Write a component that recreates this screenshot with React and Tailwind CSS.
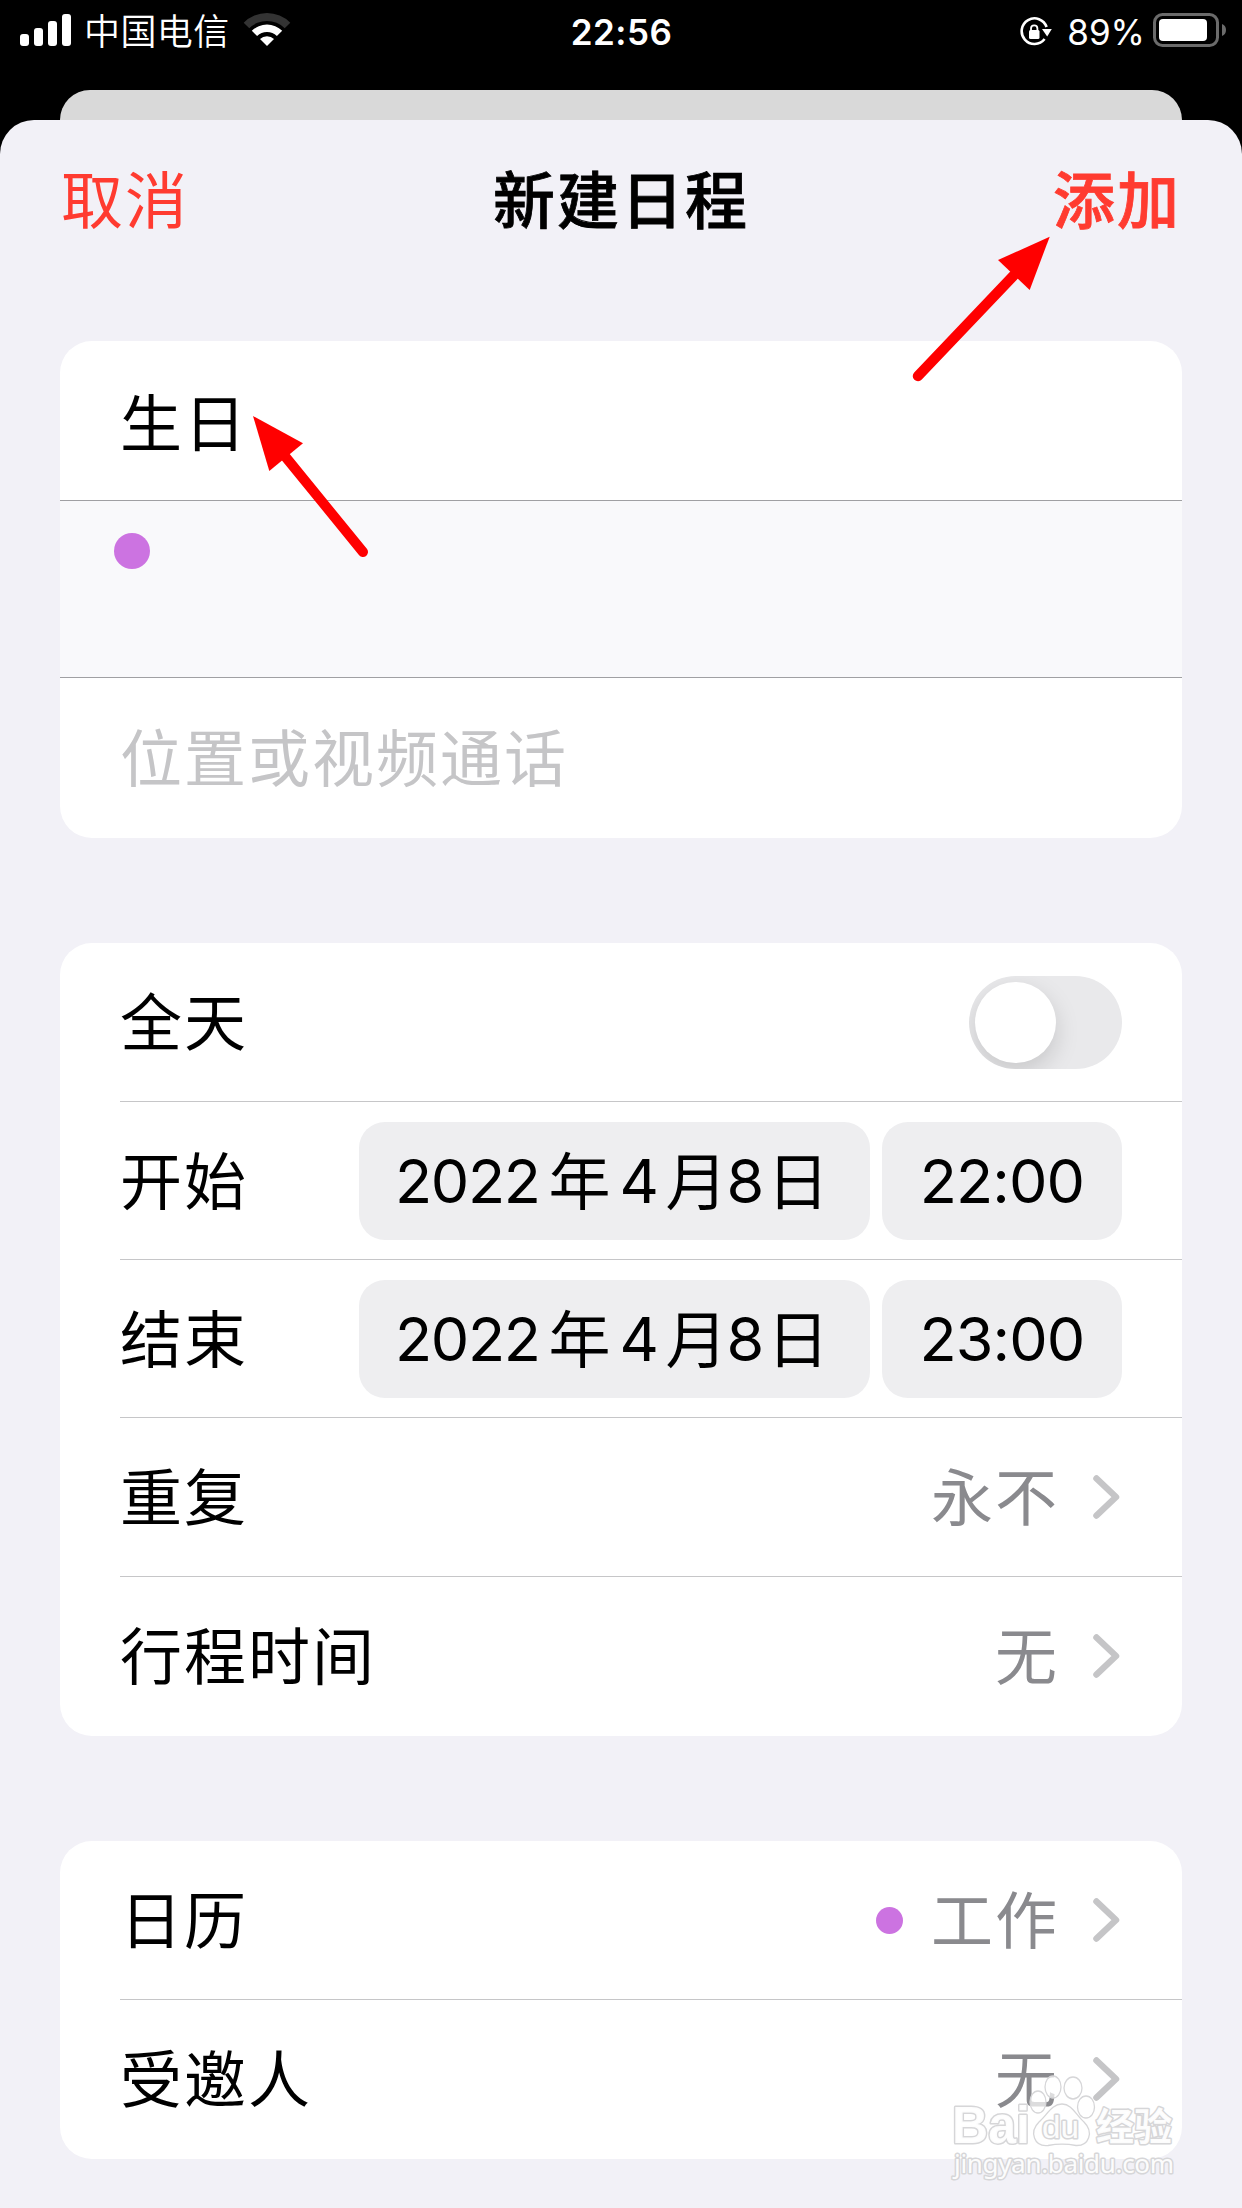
function StatusBar() {
  return (
    <header className="grid h-[90px] grid-cols-[1fr_auto_1fr] items-start bg-black pr-[15px] pl-5 text-white">
      <div className="flex h-16 items-center">
        <svg className="h-16 w-[52px]" viewBox="0 0 52 64" fill="white">
          <rect x="0" y="34" width="9" height="12" rx="3" />
          <rect x="14" y="28" width="9" height="18" rx="3" />
          <rect x="28" y="21" width="9" height="25" rx="3" />
          <rect x="42" y="14" width="9" height="32" rx="3" />
        </svg>
        <span className="ml-3 text-[36px] leading-[64px] font-[350] tracking-[0.4px]">中国电信</span>
        <svg className="ml-[13px] h-16 w-12" viewBox="0 0 48 64" fill="white">
          <path d="M0.7 22.7A33 33 0 0 1 47.3 22.7L41.7 28.3A25 25 0 0 0 6.3 28.3Z" fill="#333" />
          <path d="M8.8 30.8A21.5 21.5 0 0 1 39.2 30.8L33.9 36.1A14 14 0 0 0 14.1 36.1Z" />
          <path d="M17 39A10 10 0 0 1 31 39L24 46Z" />
        </svg>
      </div>
      <span className="pr-1 text-[35px] leading-[64px] font-semibold tracking-[0.5px]">22:56</span>
      <div className="flex h-16 items-center justify-end">
        <svg className="h-16 w-8" viewBox="0 0 32 64" fill="none">
          <path d="M26.6 27A12.8 12.8 0 1 0 24.6 39" stroke="white" strokeWidth="2.6" />
          <path d="M22 29H31.8L27.2 36.5Z" fill="white" />
          <rect x="9" y="30" width="10.5" height="9" rx="1.5" fill="white" />
          <path d="M11 31v-2.5a3.2 3.2 0 0 1 6.4 0V31" stroke="white" strokeWidth="1.8" />
        </svg>
        <span className="ml-[15px] text-[35px] leading-[64px]">89%</span>
        <svg className="ml-2 h-16 w-[74px]" viewBox="0 0 74 64">
          <rect x="1.5" y="14.5" width="63" height="31" rx="8" fill="none" stroke="#6b6b6b" strokeWidth="3" />
          <rect x="6" y="19" width="48" height="22" rx="4" fill="white" />
          <path d="M69 24a6.5 6.5 0 0 1 0 12Z" fill="#6b6b6b" />
        </svg>
      </div>
    </header>
  )
}

function Row({ label, className, last, children }) {
  return (
    <div className={`flex pl-[60px] ${className}`}>
      <div className={`flex flex-1 items-center pr-[60px] ${last ? '' : 'border-b border-[#c6c6c8]'}`}>
        <span className="mr-auto pt-1">{label}</span>
        {children}
      </div>
    </div>
  )
}

function Chevron() {
  return (
    <svg className="ml-[33px] h-12 w-[30px]" viewBox="0 0 30 48" fill="none">
      <path d="M4.5 5.5L24 24L4.5 42.5" stroke="#c5c5c7" strokeWidth="6.5" strokeLinecap="round" strokeLinejoin="round" />
    </svg>
  )
}

function Digits({ className, children }) {
  return <span className={`text-[61px] tracking-[-1.4px] ${className}`}>{children}</span>
}

function DatePills({ time }) {
  return (
    <div className="flex gap-3">
      <div className="flex h-[118px] w-[511px] items-center rounded-[26px] bg-[#eeeef0] pl-9">
        <Digits>2022</Digits>
        <span className="ml-[9px] pt-1">年</span>
        <Digits className="ml-[7px]">4</Digits>
        <span className="ml-2 pt-1">月</span>
        <Digits className="-ml-[3px]">8</Digits>
        <span className="ml-1 pt-1">日</span>
      </div>
      <div className="flex h-[118px] w-[240px] items-center justify-center rounded-[26px] bg-[#eeeef0] text-[61px] tracking-[-0.9px]">
        {time}
      </div>
    </div>
  )
}

function Arrows() {
  return (
    <svg className="pointer-events-none absolute inset-0 h-[600px] w-[1242px]" viewBox="0 0 1242 600" fill="#ff0000" stroke="#ff0000">
      <path d="M1049.7 236.7L998 260L1029.7 290Z" stroke="none" />
      <path d="M918 376L1016 273" strokeWidth="10.5" strokeLinecap="round" />
      <path d="M253 416L303 443.3L269.3 471Z" stroke="none" />
      <path d="M363 552L284 455" strokeWidth="10" strokeLinecap="round" />
    </svg>
  )
}

function Watermark() {
  return (
    <svg
      className="pointer-events-none absolute right-[60px] bottom-4 h-[120px] w-[240px]"
      viewBox="942 2072 240 120"
      fill="white"
      fillOpacity="0.7"
      stroke="#d6d6d8"
      strokeWidth="1.3"
    >
      <ellipse cx="1053" cy="2087" rx="8" ry="11" />
      <ellipse cx="1073" cy="2088" rx="9" ry="11" />
      <ellipse cx="1038" cy="2102" rx="8" ry="11" />
      <ellipse cx="1086" cy="2107" rx="8.5" ry="11" />
      <path d="M1062 2104C1072 2104 1076 2115 1084 2122C1094 2132 1089 2146 1076 2145.5C1068 2144 1056 2144 1048 2145.5C1034 2147 1029 2132 1039 2122C1047 2115 1052 2104 1062 2104Z" />
      <g fillOpacity="0.95" strokeWidth="3" strokeLinejoin="round" paintOrder="stroke">
        <text x="952" y="2143" fontFamily="Liberation Sans" fontWeight="700" fontSize="51" textLength="78" lengthAdjust="spacingAndGlyphs">Bai</text>
        <text x="1042" y="2138" fontFamily="Liberation Sans" fontSize="31" textLength="37" lengthAdjust="spacingAndGlyphs">du</text>
        <text x="1096" y="2140" fontFamily="Noto Sans CJK SC" fontWeight="700" fontSize="38" textLength="76">经验</text>
        <text x="954" y="2173" fontFamily="Noto Sans" fontSize="26" textLength="220">jingyan.baidu.com</text>
      </g>
    </svg>
  )
}

export default function App() {
  return (
    <div className="relative h-[2208px] w-[1242px] overflow-hidden bg-black font-['Inter','Noto_Sans_CJK_SC',sans-serif] text-black">
      <StatusBar />
      <div className="mx-[60px] h-[30px] rounded-t-[30px] bg-[#d9d9d9]" />

      <main className="h-[2088px] rounded-t-[34px] bg-[#f2f1f7] px-[60px] text-[62px] leading-[90px] tracking-[2px]">
        {/* Navigation */}
        <div className="mb-[61px] grid h-40 grid-cols-3 items-center pt-1 text-[#ff3b30]">
          <button className="pl-px text-left">取消</button>
          <h1 className="text-center font-medium text-black [-webkit-text-stroke:0.8px_black]">新建日程</h1>
          <button className="pr-px text-right font-medium [-webkit-text-stroke:0.8px_#ff3b30]">添加</button>
        </div>

        {/* Title and location */}
        <section className="overflow-hidden rounded-[32px] bg-white">
          <div className="flex h-[159px] items-center pt-2 pl-[60px]">生日</div>
          <div className="h-[178px] border-y border-[#a0a0a3] bg-[#f9f9fb] pt-8 pl-[54px]">
            <div className="size-9 rounded-full bg-[#cc73e1]" />
          </div>
          <div className="flex h-[160px] items-center pt-1 pl-[60px] text-[#c5c5c7]">位置或视频通话</div>
        </section>

        {/* Time */}
        <section className="mt-[105px] rounded-[32px] bg-white">
          <Row label="全天" className="h-[159px]">
            <div className="h-[93px] w-[153px] overflow-hidden rounded-full bg-[#e9e9eb] p-1.5">
              <div className="size-[81px] rounded-full bg-white shadow-[0_9px_24px_rgba(0,0,0,0.15)]" />
            </div>
          </Row>
          <Row label="开始" className="h-[158px]">
            <DatePills time="22:00" />
          </Row>
          <Row label="结束" className="h-[158px]">
            <DatePills time="23:00" />
          </Row>
          <Row label="重复" className="h-[159px]">
            <span className="pt-1 text-[#8a8a8e]">永不</span>
            <Chevron />
          </Row>
          <Row label="行程时间" className="h-[159px] pb-px" last>
            <span className="pt-1 text-[#8a8a8e]">无</span>
            <Chevron />
          </Row>
        </section>

        {/* Calendar */}
        <section className="mt-[105px] rounded-[32px] bg-white">
          <Row label="日历" className="h-[159px]">
            <span className="mr-7 size-[27px] rounded-full bg-[#cc73e1]" />
            <span className="pt-1 text-[#8a8a8e]">工作</span>
            <Chevron />
          </Row>
          <Row label="受邀人" className="h-[159px] pb-px" last>
            <span className="pt-1 text-[#8a8a8e]">无</span>
            <Chevron />
          </Row>
        </section>
      </main>

      <Arrows />
      <Watermark />
    </div>
  )
}
